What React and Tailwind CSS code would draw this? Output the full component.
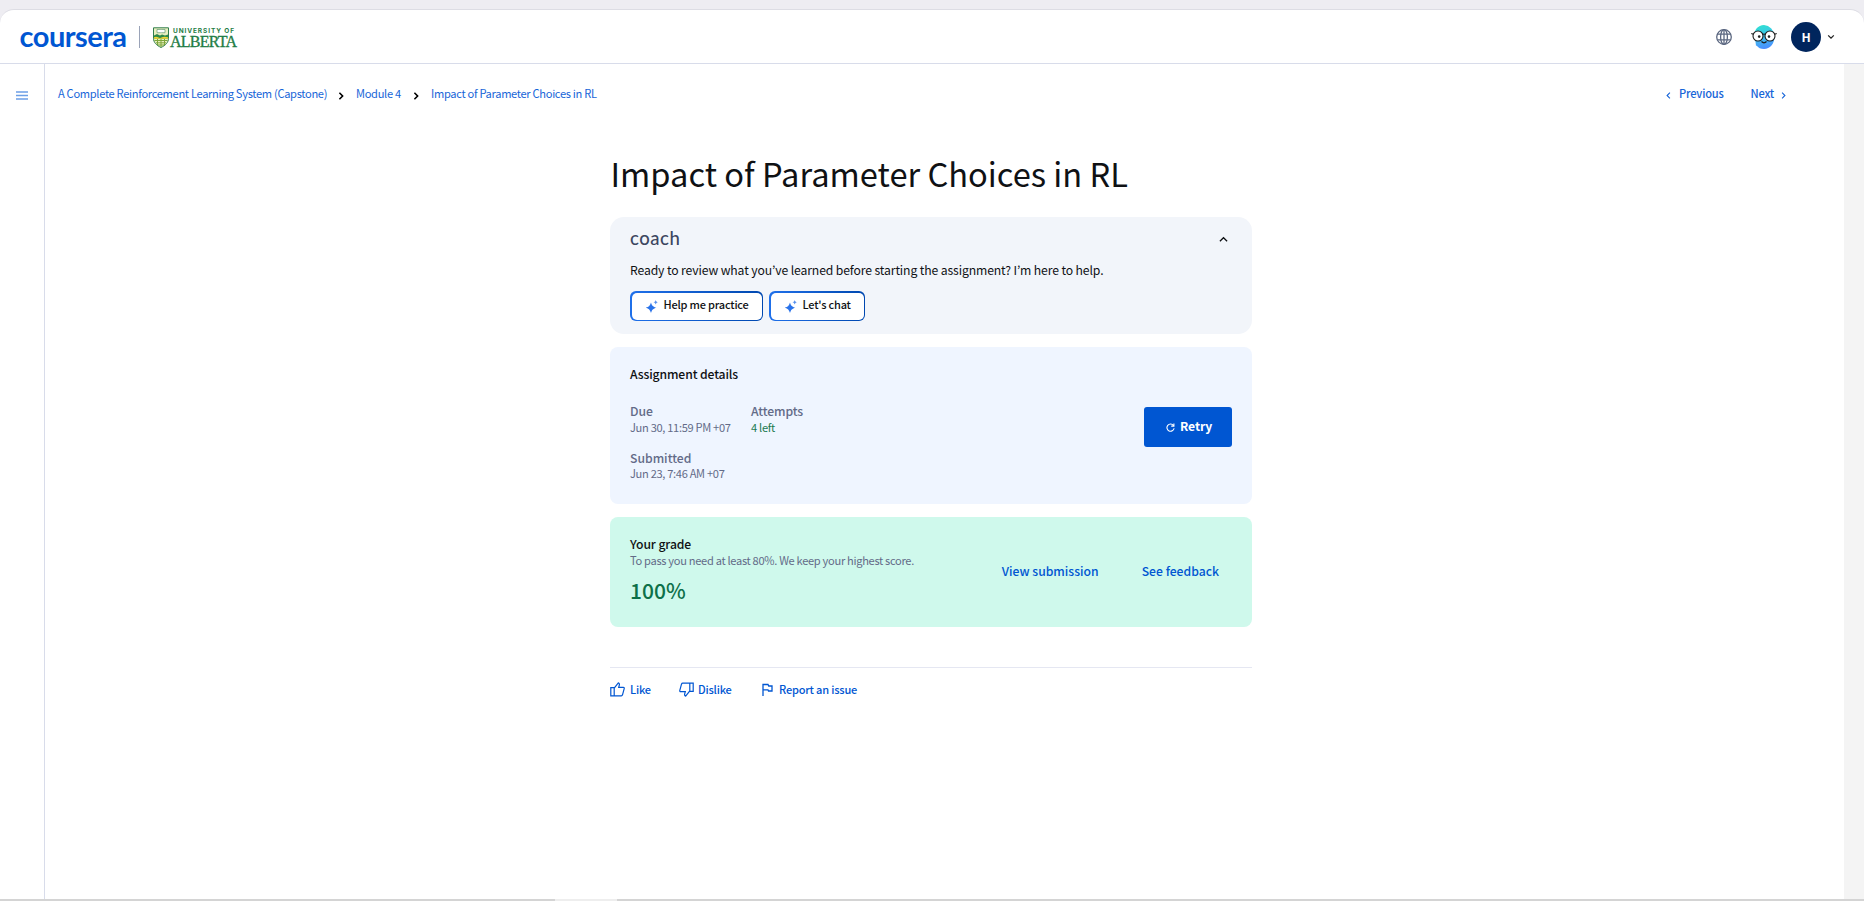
const T = ({ children, c = '' }) => <span className={`whitespace-nowrap ${c}`}>{children}</span>;

const Chevron = ({ c, d, w = 1.6 }) => (
  <svg className={`shrink-0 ${c}`} viewBox="0 0 10 10" fill="none" stroke="currentColor" strokeWidth={w}><path d={d} /></svg>
);
const RIGHT = 'M3 1l4 4-4 4';
const LEFT = 'M7 1L3 5l4 4';

const Sparkle = () => (
  <svg className="h-[13px] w-[12px] shrink-0" viewBox="0 0 12 13" fill="#2a73ea">
    <path d="M5 2.400C6 5.800 7.200 6.800 10.400 7.700 7.200 8.600 6 9.600 5 13 4 9.600 2.800 8.600 -.4 7.700 2.800 6.800 4 5.800 5 2.400z" />
    <path d="M9.700 0c.4 1.400.8 1.900 2.300 2.300-1.500.4-1.900.9-2.300 2.300-.4-1.400-.8-1.900-2.300-2.300 1.500-.4 1.900-.9 2.300-2.300z" opacity=".8" />
  </svg>
);

const Thumb = ({ c = '' }) => (
  <svg className={`h-[15px] w-[15px] shrink-0 ${c}`} viewBox="0 0 15 15" fill="none" stroke="#0056d2" strokeWidth="1.2">
    <path d="M.8 5.700h3.400v8.100H.8zM4.200 6.200L8.300.9c1 .3 1.300 1.100 1 2.200L8.700 5.300h4.600c.7 0 1.100.6.9 1.300l-1.700 6.200c-.2.6-.6 1-1.200 1H4.200" />
  </svg>
);

const Shield = () => (
  <svg className="h-[21px] w-[16px]" viewBox="0 0 16 21">
    <path d="M.5.8h15v10.500c0 4.200-3 7-7.500 9.200C3.500 18.300.5 15.500.5 11.300z" fill="#e9efc0" stroke="#2f7d4b" />
    <path d="M1 8.500l3-1.500 3 1.500 2-1 3 1 3-1v4.200H1z" fill="#2f8a4b" />
    <path d="M1 10.300q2-1.200 4 0t4 0 6 0v1.500H1z" fill="#f2d431" />
    <path d="M1.500 13.500h13M3 15.800h10M5 18h6M4.500 12v6M8 12v8M11.500 12v6" stroke="#7da63c" strokeWidth="1" />
    <path d="M4 2.500h3.500l.5.400.5-.4H12v3.200H8.500L8 6l-.5-.3H4z" fill="#fff" stroke="#4b8a5f" strokeWidth=".6" />
  </svg>
);

const Globe = () => (
  <svg className="h-4 w-4" viewBox="0 0 16 16" fill="none" stroke="#5b6780" strokeWidth="1.3">
    <circle cx="8" cy="8" r="7.300" /><ellipse cx="8" cy="8" rx="3.400" ry="7.300" /><path d="M8 .7v14.600M1.400 5.200h13.200M1.400 10.800h13.200" />
  </svg>
);

const Coach = () => (
  <svg className="h-[26px] w-[26px]" viewBox="0 0 26 26">
    <defs><linearGradient id="coachFace" x1=".3" y1="0" x2=".5" y2="1"><stop offset="0" stopColor="#2fe0d0" /><stop offset=".5" stopColor="#3fc0ee" /><stop offset="1" stopColor="#4a8cff" /></linearGradient></defs>
    <path d="M13 1a11 12 0 0 1 10.500 11.500C23.500 20 19 25 13 25c-3.500 0-5.500-1-7.500-3.500L5 22 4.500 17.500 2.800 12.500C3 6 7 1 13 1z" fill="url(#coachFace)" />
    <circle cx="7" cy="12" r="5" fill="#fff" stroke="#1b1b1b" strokeWidth="1.100" /><circle cx="19" cy="12" r="5" fill="#fff" stroke="#1b1b1b" strokeWidth="1.100" />
    <path d="M11.500 10.500q1.500-1 3 0M.3 9.500l2 .8M25.700 9.500l-2 .8M10.500 17.500q2.500 2.600 5 0" fill="none" stroke="#1b1b1b" strokeWidth="1.200" />
    <circle cx="8.200" cy="12.600" r="1.300" fill="#222" /><circle cx="18" cy="12.600" r="1.300" fill="#222" />
  </svg>
);

const ActionButton = ({ w, children }) => (
  <button className={`h-[30px] rounded-md bg-gradient-to-r from-[#1f70ea] to-[#0048b0] p-[1.500px] ${w}`}>
    <span className="flex h-full items-center gap-[6px] rounded-[5px] bg-white pl-[14px]">
      <Sparkle />
      <T c="pb-[4px] text-[11px] font-medium tracking-[-0.200px] text-[#0f1114]">{children}</T>
    </span>
  </button>
);

export default function App() {
  return (
    <div className="flex h-[901px] w-[1864px] flex-col overflow-hidden bg-[#eeedf2] pt-[9px] text-[12.200px] leading-[16px] text-[#0f1114] [font-family:'Noto_Sans_CJK_KR',sans-serif]">
      <div className="flex min-h-0 flex-1 flex-col overflow-hidden rounded-t-[14px] border-t border-[#dddde4] bg-white">
        <header className="flex h-[54px] shrink-0 items-center border-b border-[#d8dcea]">
          <T c="-mt-[2px] ml-[19.500px] w-[119.500px] text-[29px] font-bold leading-[30px] tracking-[-0.500px] text-[#0056d2] [font-family:Lato,sans-serif]">coursera</T>
          <div className="h-[22px] w-px bg-[#9aa3b8]" />
          <div className="ml-[13px] flex items-center gap-[1px] pt-[2px]">
            <Shield />
            <div className="flex flex-col pt-[1px] text-[#1f7d46]">
              <T c="ml-[3px] text-[6.500px] font-bold leading-[7px] tracking-[0.900px] [font-family:Inter,sans-serif]">UNIVERSITY OF</T>
              <T c="text-[16px] leading-[13px] tracking-[-0.750px] [-webkit-text-stroke:0.35px_#1f7d46] [font-family:'Liberation_Serif',serif]">ALBERTA</T>
            </div>
          </div>
          <div className="ml-auto flex items-center pr-[29px]">
            <Globe />
            <div className="ml-[19px]"><Coach /></div>
            <div className="ml-[14px] flex h-[30px] w-[30px] items-center justify-center rounded-full bg-[#00255d] font-bold text-white">H</div>
            <Chevron c="ml-[6px] h-[8px] w-[8px] text-[#222]" d="M1.500 3L5 6.500 8.500 3" />
          </div>
        </header>
        <div className="flex min-h-0 flex-1">
          <aside className="flex w-[45px] shrink-0 justify-center border-r border-[#d8dcea] pt-[27px]">
            <svg className="h-[9px] w-[12px]" viewBox="0 0 12 9" stroke="#6c9fe6" strokeWidth="1.600"><path d="M0 1h12M0 4.500h12M0 8h12" /></svg>
          </aside>
          <main className="flex min-w-0 flex-1 flex-col">
            <div className="mt-[21px] flex h-[16px] items-center justify-between pl-[13px] pr-[57px] text-[11.100px] text-[#1765d8]">
              <nav className="flex items-center tracking-[-0.310px]">
                <T c="w-[279px]">A Complete Reinforcement Learning System (Capstone)</T>
                <Chevron c="mt-[5px] mr-[11px] h-[8px] w-[8px] text-black" d={RIGHT} w={2} />
                <T c="w-[56px]">Module 4</T>
                <Chevron c="mt-[5px] mr-[11px] h-[8px] w-[8px] text-black" d={RIGHT} w={2} />
                <T>Impact of Parameter Choices in RL</T>
              </nav>
              <div className="flex items-center font-medium tracking-[-0.200px]">
                <Chevron c="mt-[4px] mr-[7px] h-[7px] w-[7px]" d={LEFT} /><T>Previous</T>
                <T c="ml-[27px]">Next</T><Chevron c="mt-[4px] ml-[6px] h-[7px] w-[7px]" d={RIGHT} />
              </div>
            </div>
            <div className="ml-[565px] flex w-[642px] flex-col">
              <h1 className="mt-[50px] h-[44px] whitespace-nowrap pl-[0.500px] text-[32.650px] leading-[44px]">Impact of Parameter Choices in RL</h1>
              <section className="mt-[22px] h-[117px] rounded-[14px] bg-[#f2f5fa] px-[20px] pt-[12px]">
                <div className="flex h-[20px] items-center justify-between">
                  <T c="pb-[3px] text-[18.500px] font-medium leading-[20px] tracking-[0.550px] text-[#3c4660] [font-family:Lato,sans-serif]">coach</T>
                  <Chevron c="mr-[4px] h-[9px] w-[9px] text-[#0f1114]" d="M1 7l4-4 4 4" w={1.4} />
                </div>
                <div className="mt-[13px] flex tracking-[-0.120px]"><T>Ready to review what you’ve learned before starting the assignment? I’m here to help.</T></div>
                <div className="mt-[13px] flex gap-[6px]">
                  <ActionButton w="w-[133px]">Help me practice</ActionButton>
                  <ActionButton w="w-[96px]">Let's chat</ActionButton>
                </div>
              </section>
              <section className="mt-[13px] flex h-[157px] items-start justify-between rounded-lg bg-[#eff5ff] px-[20px]">
                <div className="flex flex-col pt-[19px]">
                  <T c="font-medium tracking-[-0.120px]">Assignment details</T>
                  <div className="mt-[21px] grid grid-cols-[101px_auto] gap-x-[20px] text-[#636b88]">
                    <T c="font-medium">Due</T><T c="font-medium tracking-[-0.100px]">Attempts</T>
                    <T c="text-[11.100px] tracking-[-0.320px]">Jun 30, 11:59 PM +07</T><T c="text-[11.100px] tracking-[-0.300px] text-[#1b7a50]">4 left</T>
                    <T c="mt-[15px] font-medium">Submitted</T><span />
                    <T c="-mt-px text-[11.100px] tracking-[-0.320px]">Jun 23, 7:46 AM +07</T>
                  </div>
                </div>
                <button className="mt-[60px] flex h-[40px] w-[88px] items-center rounded-[3px] bg-[#0056d2] pl-[22px] font-bold text-white">
                  <svg className="mt-px mr-[5px] h-[9px] w-[9px]" viewBox="0 0 10 10" fill="none" stroke="#fff" strokeWidth="1.200"><path d="M8.300 2.800A4 4 0 1 0 9 5.800M8.800.5v3H5.800" /></svg>
                  <T c="pb-[2px] tracking-[-0.100px]">Retry</T>
                </button>
              </section>
              <section className="mt-[13px] flex h-[110px] items-start justify-between rounded-lg bg-[#cff9ec] pl-[20px] pr-[33px]">
                <div className="flex flex-col pt-[19px]">
                  <T c="font-medium tracking-[-0.100px]">Your grade</T>
                  <T c="text-[11.100px] tracking-[-0.310px] text-[#636b88]">To pass you need at least 80%. We keep your highest score.</T>
                  <T c="mt-[9px] text-[21px] font-medium leading-[26px] text-[#0d7049]">100%</T>
                </div>
                <div className="flex gap-[43px] pt-[46px] font-medium text-[#0056d2]"><T>View submission</T><T>See feedback</T></div>
              </section>
              <div className="mt-[40px] flex items-center border-t border-[#e5e7f2] pt-[13px] text-[11px] font-medium tracking-[-0.180px] text-[#0056d2]">
                <Thumb /><T c="ml-[5px] w-[49px]">Like</T>
                <Thumb c="rotate-180" /><T c="ml-[4px] w-[64px]">Dislike</T>
                <svg className="h-[13px] w-[11px]" viewBox="0 0 11 13" fill="none" stroke="#0056d2" strokeWidth="1.300"><path d="M1 13V1.500h5l.7 1.500H10v5H6.500L6 6.800H1" /></svg>
                <T c="ml-[6px]">Report an issue</T>
              </div>
            </div>
          </main>
          <div className="w-[20px] shrink-0 bg-[#f4f4f4]" />
        </div>
        <div className="flex h-[2px] shrink-0 bg-[#d4d4d4]"><div className="ml-[555px] w-[62px] bg-[#eee]" /></div>
      </div>
    </div>
  );
}
